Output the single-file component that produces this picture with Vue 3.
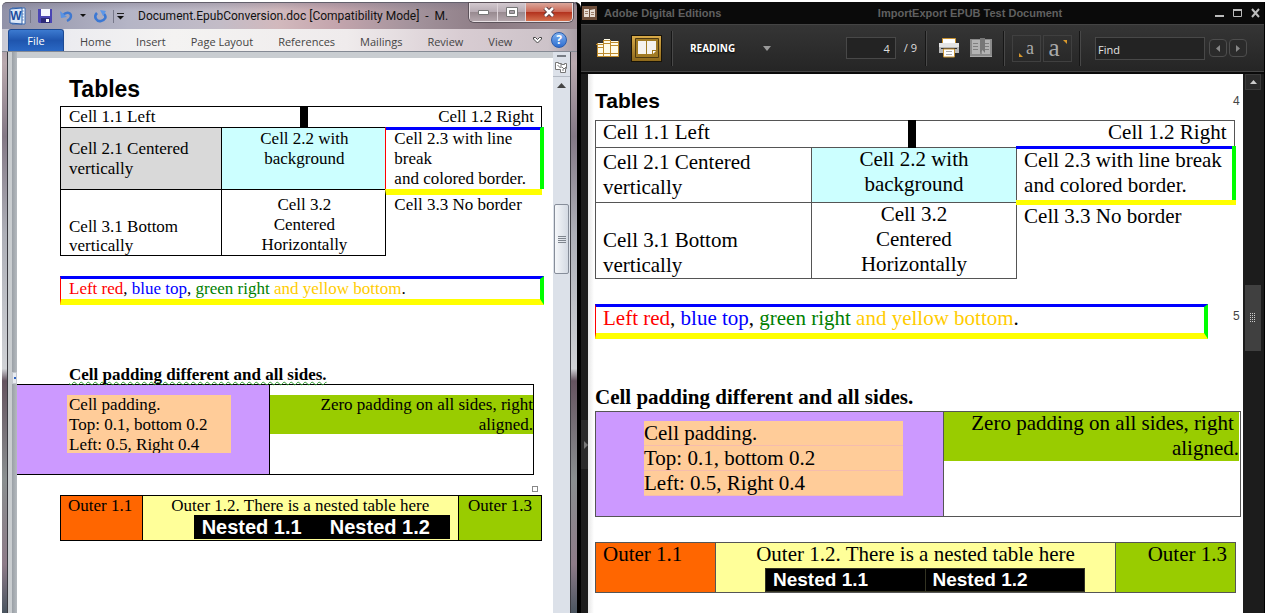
<script setup>
const tabs = ['Home', 'Insert', 'Page Layout', 'References', 'Mailings', 'Review', 'View']
</script>

<template>
  <main class="desktop">
    <section class="word">
      <header class="word-title">
        <svg class="word-logo" width="18" height="18" viewBox="0 0 18 18">
          <path d="M3 1h13v16H3z" fill="#fff" stroke="#3a6cb4" />
          <path d="M13 4h2M13 7h2M13 10h2M13 13h2" stroke="#7fa6d8" />
          <path d="M1 2l12-1v16L1 16z" fill="#dbe8f8" stroke="#2b5da8" />
          <text x="7" y="13" text-anchor="middle" class="logo-letter">W</text>
        </svg>
        <i class="bar"></i>
        <button class="tool" aria-label="Save">
          <svg width="14" height="14" viewBox="0 0 14 14">
            <path d="M0 0h14v14H1l-1-1z" fill="#4a45b4" />
            <path d="M3 0h9v7H3z" fill="#f4f6ff" />
            <path d="M3 9h9v5H3z" fill="#2c2a78" />
            <path d="M8 10h3v3H8z" fill="#fff" />
          </svg>
        </button>
        <button class="tool undo" aria-label="Undo">
          <svg width="14" height="13" viewBox="0 0 14 13">
            <path d="M3 5c4-4 8-2 8 1s-2 4-4 5" fill="none" stroke="#3f78d0" stroke-width="2.4" />
            <path d="M0 1l1 7 6-1z" fill="#5a93e4" />
          </svg>
        </button>
        <svg width="6" height="4" viewBox="0 0 6 4"><path d="M0 0h6L3 3z" fill="#111" /></svg>
        <button class="tool redo" aria-label="Repeat">
          <svg width="13" height="13" viewBox="0 0 13 13">
            <path d="M3 3C-1 7 3 12 7 11s6-4 3-7" fill="none" stroke="#3b78d4" stroke-width="2.6" />
            <path d="M6 0l6 1-3 5z" fill="#5c97e8" />
          </svg>
        </button>
        <i class="bar"></i>
        <svg class="more" width="7" height="8" viewBox="0 0 7 8">
          <path d="M0 1.500h7" stroke="#222" /><path d="M0 4h7L3.500 7.500z" fill="#111" />
        </svg>
        <h1>Document.EpubConversion.doc [Compatibility Mode] &nbsp;-&nbsp; M.</h1>
        <div class="controls">
          <button aria-label="Minimize">
            <svg width="11" height="5" viewBox="0 0 11 5"><path d="M.5.5h10v4H.5z" fill="#fff" stroke="#777" /></svg>
          </button>
          <button aria-label="Maximize">
            <svg width="12" height="10" viewBox="0 0 12 10">
              <path d="M.5.5h11v9H.5z" fill="#fff" stroke="#777" /><path d="M3.500 3.500h5v3h-5z" fill="#a9a0a8" stroke="#777" />
            </svg>
          </button>
          <button class="close" aria-label="Close">
            <svg width="12" height="10" viewBox="0 0 12 10">
              <path d="M2 1l8 8M10 1L2 9" stroke="#59383a" stroke-width="4.500" /><path d="M2 1l8 8M10 1L2 9" stroke="#fff" stroke-width="2.500" />
            </svg>
          </button>
        </div>
      </header>

      <nav class="ribbon">
        <button class="file">File</button>
        <button v-for="t in tabs" :key="t" class="tab">{{ t }}</button>
        <span class="ribbon-end">
          <button aria-label="Expand the ribbon">
            <svg width="9" height="8" viewBox="0 0 9 8">
              <path d="M.5 1.500h2l2 2 2-2h2v1.500l-4 4-4-4z" fill="#fff" stroke="#444" />
            </svg>
          </button>
          <button aria-label="Help" class="help">?</button>
        </span>
      </nav>

      <div class="word-body">
        <div class="gutter"><i></i></div>
        <article class="page">
          <h2>Tables</h2>
          <table class="t1">
            <colgroup><col class="w-a" /><col class="w-b" /><col class="w-c" /><col /></colgroup>
            <tbody>
              <tr class="r1">
                <td colspan="2">Cell 1.1 Left</td>
                <td colspan="2" class="thick right end">Cell 1.2 Right</td>
              </tr>
              <tr class="r2">
                <td class="grey middle">Cell 2.1 Centered vertically</td>
                <td colspan="2" class="cyan center">Cell 2.2 with background</td>
                <td class="rainbow">Cell 2.3 with line break<br />and colored border.</td>
              </tr>
              <tr class="r3">
                <td class="bottom">Cell 3.1 Bottom vertically</td>
                <td colspan="2" class="center">Cell 3.2<br />Centered<br />Horizontally</td>
                <td class="bare">Cell 3.3 No border</td>
              </tr>
            </tbody>
          </table>

          <p class="framed">
            <span class="red">Left red</span>, <span class="blue">blue top</span>, <span class="green">green right</span> <span class="gold">and yellow bottom</span>.
          </p>

          <h3><span>Cell padding different and all sides.</span></h3>
          <table class="t2">
            <colgroup><col class="w-d" /><col /></colgroup>
            <tbody>
              <tr>
                <td class="violet"><div class="peach">Cell padding.<br />Top: 0.1, bottom 0.2<br />Left: 0.5, Right 0.4</div></td>
                <td><div class="lime">Zero padding on all sides, right aligned.</div></td>
              </tr>
            </tbody>
          </table>
          <i class="handle"></i>
          <table class="t3">
            <colgroup><col class="w-e" /><col /><col class="w-f" /></colgroup>
            <tbody>
              <tr>
                <td class="orange">Outer 1.1</td>
                <td class="lemon center">
                  Outer 1.2. There is a nested table here
                  <table class="nested">
                    <tbody><tr><td>Nested 1.1</td><td>Nested 1.2</td></tr></tbody>
                  </table>
                </td>
                <td class="leaf center">Outer 1.3</td>
              </tr>
            </tbody>
          </table>
        </article>
        <aside class="word-scroll">
          <i class="split"></i>
          <svg width="13" height="12" viewBox="0 0 13 12">
            <path d="M.5 1.500h3v1h3v1h3v-1h2v5h-1v4h-5v-3h-5z" fill="#fff" stroke="#777" />
            <path d="M2.500 4l3 3M6 3v4M7 6l2 2 2-2M8 10V8" fill="none" stroke="#777" />
          </svg>
          <button aria-label="Scroll up"><svg width="9" height="5" viewBox="0 0 9 5"><path d="M0 5h9L4.500 0z" fill="#444" /></svg></button>
          <span class="word-track"><i class="before"></i><i class="thumb"></i><i class="after"></i></span>
        </aside>
      </div>
    </section>

    <section class="ade">
      <header class="ade-title">
        <svg width="15" height="14" viewBox="0 0 15 14">
          <path d="M0 0h15v14H0z" fill="#70503c" />
          <path d="M2 3h5v8H2zM8 4l5-1v8H8z" fill="#e8ddd4" />
          <path d="M3 5.500h3M3 7.500h3M9 6.500h3M9 8.500h3" stroke="#9a7c68" />
        </svg>
        <span>Adobe Digital Editions</span>
        <h1>ImportExport EPUB Test Document</h1>
        <div class="ade-controls">
          <button aria-label="Minimize"><svg width="9" height="10" viewBox="0 0 9 10"><path d="M0 8h9" stroke="#bbb" stroke-width="2" /></svg></button>
          <button aria-label="Maximize"><svg width="9" height="10" viewBox="0 0 9 10"><path d="M.5 1v7.500h8V1" fill="none" stroke="#bbb" /><path d="M0 2h9" stroke="#bbb" stroke-width="2" /></svg></button>
          <button aria-label="Close"><svg width="9" height="10" viewBox="0 0 9 10"><path d="M1 1l7 8M8 1L1 9" stroke="#bbb" stroke-width="2" /></svg></button>
        </div>
      </header>

      <div class="ade-bar">
        <button class="library" aria-label="Library">
          <svg width="24" height="20" viewBox="0 0 24 20">
            <path d="M1 5h6v13H1zM8 1h6v17H8zM15 3h8v15h-8z" fill="#fffbe8" />
            <path d="M1.500 5v13M7.500 2v16M14.500 2v16M22.500 3v15M0 6.500h7M1 9.500h6M1 15.500h6M8 2.500h6M8 5.500h6M8 15.500h6M15 4.500h8M15 7.500h8M15 15.500h8M1 18.500h22" stroke="#bd8a2c" />
          </svg>
        </button>
        <button class="reading-icon" aria-label="Reading view">
          <svg width="24" height="20" viewBox="0 0 24 20">
            <path d="M.5.5h23v19H.5z" fill="#a07a24" stroke="#4d3a12" />
            <path d="M3 3h8v13H3zM12 3h9v9h-4v4h-5z" fill="#f4f2ee" />
            <path d="M18 13h3l-3 3z" fill="#fff" />
          </svg>
        </button>
        <i class="groove"></i>
        <label class="mode">
          <select aria-label="View mode"><option>READING</option></select>
          <svg width="8" height="5" viewBox="0 0 8 5"><path d="M0 0h8L4 5z" fill="#999" /></svg>
        </label>
        <label class="pager"><input aria-label="Page" value="4" /><span>/ 9</span></label>
        <i class="groove"></i>
        <button class="print" aria-label="Print">
          <svg width="22" height="20" viewBox="0 0 22 20">
            <path d="M4.500 6V.5h13V6" fill="#fff" stroke="#c99330" />
            <path d="M1 5h20v10H1z" fill="#b9b9b9" />
            <path d="M1 5h20v4H1z" fill="#e4e4e4" />
            <path d="M3 10.500h16" stroke="#333" />
            <path d="M5.500 11h11v8h-11z" fill="#fff" stroke="#c99330" />
            <path d="M8 13.500h6M8 16.500h6" stroke="#aaa" />
          </svg>
        </button>
        <button class="mark" aria-label="Bookmark">
          <svg width="22" height="20" viewBox="0 0 22 20">
            <path d="M0 1h22v18H0z" fill="#8b8b8b" />
            <path d="M2 2h8v14H2zM12 2h8v14h-8z" fill="#b4b4b4" />
            <path d="M3 5.500h5M3 8.500h5M3 11.500h5M15 5.500h4M15 8.500h4M15 11.500h4" stroke="#808080" />
            <path d="M10 0h5v15l-2.500-3-2.500 3z" fill="#777" />
            <path d="M0 18.500h22" stroke="#aaa" />
          </svg>
        </button>
        <i class="groove"></i>
        <div class="sizes">
          <button class="small-a" aria-label="Smaller text">
            <svg width="4" height="4" viewBox="0 0 4 4"><path d="M0 0l4 4H0z" fill="#d8982c" /></svg><span>a</span>
          </button>
          <button class="big-a" aria-label="Larger text">
            <span>a</span><svg width="4" height="4" viewBox="0 0 4 4"><path d="M0 0h4v4z" fill="#d8982c" /></svg>
          </button>
        </div>
        <i class="groove"></i>
        <input class="find" aria-label="Find" value="Find" />
        <div class="steps">
          <button aria-label="Previous match"><svg width="4" height="7" viewBox="0 0 4 7"><path d="M4 0v7L0 3.500z" fill="#888" /></svg></button>
          <button aria-label="Next match"><svg width="4" height="7" viewBox="0 0 4 7"><path d="M0 0v7l4-3.500z" fill="#888" /></svg></button>
        </div>
      </div>

      <div class="ade-body">
        <div class="ade-side"><button aria-label="Show panel"><svg width="4" height="8" viewBox="0 0 4 8"><path d="M0 0v8l4-4z" fill="#777" /></svg></button></div>
        <article class="book">
          <div class="numbered"><h2>Tables</h2><span>4</span></div>
          <table class="b1">
            <colgroup><col class="x-a" /><col class="x-b" /><col class="x-c" /><col /></colgroup>
            <tbody>
              <tr class="q1">
                <td colspan="2"><p>Cell 1.1 Left</p></td>
                <td colspan="2" class="thick right"><p>Cell 1.2 Right</p></td>
              </tr>
              <tr class="q2">
                <td class="middle"><p>Cell 2.1 Centered vertically</p></td>
                <td colspan="2" class="cyan center"><p>Cell 2.2 with<br /> background</p></td>
                <td class="rainbow"><p>Cell 2.3 with line break<br />and colored border.</p></td>
              </tr>
              <tr class="q3">
                <td class="bottom"><p>Cell 3.1 Bottom vertically</p></td>
                <td colspan="2" class="center"><p>Cell 3.2<br />Centered<br />Horizontally</p></td>
                <td class="bare"><p>Cell 3.3 No border</p></td>
              </tr>
            </tbody>
          </table>
          <div class="numbered second">
            <div class="framed">
              <p>
                <span class="red">Left red</span>, <span class="blue">blue top</span>, <span class="green">green right</span> <span class="gold">and yellow bottom</span>.
              </p>
            </div>
            <span>5</span>
          </div>
          <h3>Cell padding different and all sides.</h3>
          <table class="b2">
            <colgroup><col class="x-d" /><col /></colgroup>
            <tbody>
              <tr>
                <td class="violet"><div class="peach">Cell padding.<br />Top: 0.1, bottom 0.2<br />Left: 0.5, Right 0.4</div></td>
                <td><div class="lime"><p>Zero padding on all sides, right&nbsp;<br />aligned.</p></div></td>
              </tr>
            </tbody>
          </table>
          <table class="b3">
            <colgroup><col class="x-e" /><col /><col class="x-e" /></colgroup>
            <tbody>
              <tr>
                <td class="orange"><p>Outer 1.1</p></td>
                <td class="lemon center">
                  <p>Outer 1.2. There is a nested table here</p>
                  <table class="nested">
                    <tbody><tr><td>Nested 1.1</td><td>Nested 1.2</td></tr></tbody>
                  </table>
                </td>
                <td class="leaf right"><p>Outer 1.3</p></td>
              </tr>
            </tbody>
          </table>
        </article>
        <aside class="ade-scroll">
          <button aria-label="Scroll up"><svg width="7" height="4" viewBox="0 0 7 4"><path d="M0 4h7L3.500 0z" fill="#ccc" /></svg></button>
          <i class="before"></i>
          <span class="thumb"><i></i></span>
          <i class="after"></i>
        </aside>
      </div>
    </section>
  </main>
</template>

<style>
body { margin: 0; background: #fff; }
</style>

<style scoped>
* { box-sizing: border-box; }
h1, h2, h3, p { margin: 0; }
button { padding: 0; border: 0; background: none; font: inherit; color: inherit; }
svg { display: block; flex: none; }
i { display: block; flex: none; }
table { border-spacing: 0; table-layout: fixed; width: 100%; }
td { padding: 0; vertical-align: top; }

.desktop { display: grid; grid-template-columns: 581fr 684fr; min-height: 100vh; padding: 2px 0; }
.right { text-align: right; }
.center { text-align: center; }
td.middle { vertical-align: middle; }
td.bottom { vertical-align: bottom; }
.cyan { background: #cff; }
.red { color: #f00; }
.blue { color: #00f; }
.green { color: #008000; }
.gold { color: #fc0; }
.violet { background: #c9f; }
.peach { background: #fc9; }
.lime, .leaf { background: #9c0; }
.orange { background: #f60; }
.lemon { background: #ff9; }

/* Word window */
.word {
  display: flex; flex-direction: column; min-width: 0;
  margin-left: 2px; padding-left: 5px; padding-right: 6px;
  border-right: 4px solid #000; border-radius: 6px 6px 0 0;
  background: linear-gradient(180deg, #8f8c9f, #b9a9ae 10%, #847986 22%, #aeb0b8 38%, #d0d2d6 60%, #655460 62%, #8a8f90 78%, #8d7b88 92%, #4a5560);
}
.word-title {
  display: flex; align-items: center; height: 27px; margin: 0 -6px 0 -5px; padding-left: 7px;
  border-top: 1px solid #63606c; border-radius: 5px 5px 0 0;
  font: 12px/16px Roboto, sans-serif; color: #111;
  background: linear-gradient(rgba(120, 112, 130, .35), transparent 30%), linear-gradient(90deg, #9192a8, #b5b5c6 22%, #c3bcc7 38%, #d2b9bd 48%, #c4a5ad 58%, #a2929b 72%, #8c7b84 85%, #9d8d95);
}
.logo-letter { font: bold 12px "Liberation Sans", sans-serif; fill: #1d4f9e; }
.bar { width: 1px; height: 13px; background: #77788a; }
.word-logo + .bar { margin: 0 7px 0 3px; }
.undo { margin: 0 6px 0 8px; }
.redo { margin: 0 6px 0 8px; }
.more { margin: 0 14px 0 3px; }
.word-title h1 { flex: 1; font: inherit; white-space: nowrap; overflow: hidden; }
.controls { display: flex; align-self: flex-start; margin-right: 4px; border: 1px solid #e8e0e4; border-top: 0; border-radius: 0 0 5px 5px; box-shadow: 0 0 0 1px #5c525a; }
.controls button { display: grid; place-items: center; width: 28px; height: 18px; border-right: 1px solid #ddd3d8; background: linear-gradient(#d2c8ce, #b8acb4 48%, #97898f 50%, #b3a6ac); }
.controls .close { width: 46px; border: 0; border-radius: 0 0 4px 0; background: linear-gradient(#dba79b, #cc6a58 48%, #b2301c 50%, #d4704e); }

.ribbon {
  display: flex; height: 23px; margin: 0 -6px 0 -5px; padding-left: 6px;
  border-bottom: 1px solid #858a94; font: 11px/22px "Open Sans", sans-serif; color: #444;
  background: linear-gradient(90deg, #c9c9d4, #ececf0 12%, #f4f3f2 30%, #efebec 60%, #d8ccd2 80%, #cdc3c9 95%, #a89da5);
}
.file { width: 56px; border: 1px solid #1c4a94; border-bottom: 0; border-radius: 3px 3px 0 0; line-height: 20px; color: #fff; background: linear-gradient(#3c7ad0, #1f55ae 50%, #2a68c4); }
.tab { padding: 2px 12px 0 13px; white-space: nowrap; }
.file + .tab { padding-left: 16px; }
.ribbon-end { display: flex; align-items: center; gap: 9px; margin-left: auto; padding-right: 10px; }
.help { width: 16px; height: 16px; border: 1px solid #2a5cad; border-radius: 8px; background: linear-gradient(#7eb0ee, #2f6ed0); color: #fff; font: bold 12px/14px "Open Sans", sans-serif; }

.word-body { flex: 1; display: flex; min-height: 0; border-left: 1px solid #3a3a40; border-right: 1px solid #3a3a40; background: #c9cdd1; }
.gutter { display: flex; align-items: center; width: 9px; padding-left: 4px; background: linear-gradient(90deg, #c9cdd0 4px, #9aa0a6 4px, #b5babf); }
.gutter i { width: 5px; height: 12px; margin-top: 90px; background: linear-gradient(#2f62c0, #2f62c0) center / 2px 2px no-repeat #e8ebf0; border: 1px solid #c4c8ce; }
.page {
  flex: 1; min-width: 0; margin-top: 6px; padding: 17px 11px 0 43px; background: #fff;
  font: 17px/20px "Liberation Serif", serif; color: #000;
}
.page h2 { margin-bottom: 3px; padding-left: 9px; font: bold 23px/28px "Liberation Sans", sans-serif; }
.page .t1 td { border: solid #000; border-width: 1px 0 0 1px; padding: 0 7px 0 8px; }
.w-a { width: 33.500%; }
.w-b { width: 16.300%; }
.w-c { width: 17.700%; }
.r1 { height: 21px; }
.r2 { height: 62px; }
.r3 { height: 67px; }
.page .t1 .end { border-right-width: 1px; }
.page .t1 .thick { border-left-width: 8px; }
.page .t1 .r2 td { padding-top: 1px; }
.page .t1 .r3 td { padding-top: 5px; border-bottom-width: 1px; }
.page .t1 .bottom { line-height: 19px; }
.page .t1 .grey { background: #d9d9d9; }
.page .t1 .rainbow { padding-right: 0; border-color: #00f #0f0 #000 #f00; border-right-width: 2px; box-shadow: 2px 0 #0f0, inset 0 2px #00f; }
.page .t1 .r3 .bare { padding: 0 0 0 8px; border: 0; border-top: 6px solid #ff0; border-left: 1px solid #000; }
.page .framed { margin: 20px -2px 0 0; padding-left: 8px; border: solid; border-width: 3px 4px 6px 1px; border-color: #00f #0f0 #ff0 #f00; }
.page h3 { margin-top: 60px; padding-left: 9px; font: bold 17px/19px "Liberation Serif", serif; }
.page h3 span { text-decoration: underline wavy #2b9a2b 1px; text-decoration-skip-ink: none; text-underline-offset: 1px; }
.t2 { width: calc(100% + 35px); margin-left: -43px; border: solid #000; border-width: 1px 1px 1px 0; }
.t2 td { height: 89px; padding-top: 10px; }
.w-d { width: 49%; }
.t2 .violet { padding-left: 50px; padding-right: 38px; border-right: 1px solid #000; }
.t2 .peach { max-height: 58px; padding-left: 2px; overflow: hidden; white-space: nowrap; }
.t2 .lime { max-height: 39px; padding-left: 40px; text-align: right; }
.handle { width: 6px; height: 6px; margin: 11px 4px 3px auto; border: 1px solid #888; }
.t3 { border: 1px solid #000; line-height: 19px; }
.t3 > tbody > tr > td + td { border-left: 1px solid #000; }
.w-e { width: 16.800%; }
.w-f { width: 17.300%; }
.t3 .orange { padding-left: 7px; }
.t3 .nested { width: calc(100% - 59px); margin: 0 8px 1px auto; background: #000; color: #fff; text-align: left; font: bold 20px/24px "Liberation Sans", sans-serif; }
.t3 .nested td { padding-left: 8px; }

.word-scroll { display: flex; flex-direction: column; align-items: center; width: 17px; background: #dce1e9; }
.split { width: 9px; height: 2px; margin: 3px 0 4px; background: #777c84; }
.word-scroll button { display: grid; place-items: center; width: 17px; height: 17px; margin-top: 3px; border-top: 1px solid #b4bac4; }
.word-track { flex: 1; display: flex; flex-direction: column; }
.before { flex: 112 0 0; }
.after { flex: 341 0 0; }
.thumb { flex: 68 0 0; }
.word-track .thumb { width: 15px; border: 1px solid #868d99; border-radius: 2px; background: repeating-linear-gradient(#7f858e 0 1px, transparent 1px 2px) center / 8px 7px no-repeat, linear-gradient(90deg, #f5f7fa, #d4dae3); }

/* Digital Editions window */
.ade { display: flex; flex-direction: column; min-width: 0; background: #0a0a0a; border-right: 1px solid #000; }
.ade-title { display: grid; grid-template-columns: 15px 263fr auto 188fr; align-items: center; gap: 7px; height: 22px; padding: 0 4px 0 1px; font: bold 11px/14px "Liberation Sans", sans-serif; color: #606060; }
.ade-title h1 { font: inherit; }
.ade-controls { display: flex; justify-content: flex-end; gap: 9px; }
.ade-bar { display: flex; align-items: center; height: 48px; padding-left: 15px; border-top: 1px solid #444; border-bottom: 1px solid #454545; background: linear-gradient(#353535, #252525); color: #ddd; font: 11px/14px "Open Sans", sans-serif; }
.reading-icon { display: grid; place-items: center; width: 31px; height: 27px; margin: 0 9px 0 11px; border: 1px solid #1a1408; background: linear-gradient(#d8aa48, #8f6a1c); }
.groove { width: 2px; height: 35px; background: #161616; border-right: 1px solid #484848; }
.mode { display: flex; align-items: center; margin-left: 17px; }
.mode select { appearance: none; width: 73px; padding: 0; border: 0; background: none; color: #fff; font: bold 10px/14px "Open Sans", sans-serif; text-shadow: 0 1px 2px #000; }
.pager { display: flex; align-items: center; gap: 8px; margin: 0 8px 0 auto; white-space: nowrap; }
.pager input { width: 50px; height: 22px; padding: 0 5px; border: 1px solid #484848; background: #232323; color: #ddd; font: inherit; text-align: right; }
.print { margin: 0 10px 0 11px; }
.mark { margin-right: 11px; }
.sizes { display: flex; gap: 2px; margin: 0 7px; color: #aaa; font: 18px/20px "Liberation Serif", serif; }
.sizes button { display: flex; justify-content: center; gap: 3px; width: 29px; height: 27px; border: 1px solid #404040; }
.small-a { align-items: flex-end; padding-bottom: 4px; }
.small-a span { line-height: 17px; }
.big-a { padding-top: 4px; font-size: 25px; line-height: 16px; }
.find { width: 110px; height: 23px; margin: 0 4px 0 14px; padding: 3px 2px 0; border: 1px solid #484848; background: #232323; color: #e4e4e4; font: 11px/14px "Open Sans", sans-serif; }
.steps { display: flex; gap: 2px; margin-right: 17px; }
.steps button { display: grid; place-items: center; width: 18px; height: 18px; border: 1px solid #4d4d4d; border-radius: 4px; background: #2b2b2b; }

.ade-body { flex: 1; display: flex; padding-top: 2px; }
.ade-side { display: flex; align-items: center; width: 7px; background: #1c1c1c; }
.ade-side button { display: grid; place-items: center end; width: 7px; height: 49px; margin-top: 202px; background: #2b2b2b; }
.book { flex: 1; min-width: 0; padding: 14px 7px 0 7px; background: linear-gradient(90deg, #e6e6e6, #fff 6px); font: 21px/25px "Liberation Serif", serif; color: #000; }
.book h2 { font: bold 21px/25px "Liberation Sans", sans-serif; }
.numbered { display: flex; justify-content: space-between; align-items: center; margin-right: -4px; }
.numbered > span { width: 7px; font: 12px/14px "Liberation Sans", sans-serif; color: #444; }
.numbered.second > span { align-self: flex-start; margin-top: 5px; }
.book p { margin-top: -1px; }
.b1, .b2, .b3 { border-collapse: collapse; }
.b1 { margin-top: 7px; }
.b1 td, .b2 td, .b3 td { border: 1px solid #555; }
.b1 td { padding: 0 7px; }
.x-a { width: 33.800%; }
.x-b { width: 15.700%; }
.x-c { width: 16.450%; }
.q1 { height: 27px; }
.q2 { height: 55px; }
.q3 { height: 76px; }
.b1 .thick { border-left: 8px solid #000; }
.b1 .rainbow { border-style: solid; border-width: 3px 4px 5px 1px; border-color: #00f #0f0 #ff0 #f00; padding-right: 0; white-space: nowrap; }
.b1 .bare { border-right-style: none; border-bottom-style: none; }
.second { margin-top: 25px; }
.second .framed { flex: 1; margin-right: 25px; }
.book .framed { height: 35px; padding-left: 7px; border: solid; border-width: 3px 4px 6px 1px; border-color: #00f #0f0 #ff0 #f00; }
.book h3 { margin: 46px 0 1px; font: bold 21px/25px "Liberation Serif", serif; }
.b2 { width: calc(100% + 5px); }
.x-d { width: 53.950%; }
.b2 td { height: 105px; }
.b2 .violet { padding: 9px 40px 0 48px; }
.b2 .peach { background: repeating-linear-gradient(#fc9 0 24px, #f5bcae 24px 25px); }
.b2 .lime { margin-right: 1px; text-align: right; display: flow-root; }
.b3 { margin-top: 25px; }
.x-e { width: 18.750%; }
.b3 > tbody > tr > td { padding: 0 8px 0 7px; }
.b3 > tbody > tr > .lemon { padding: 0; }
.b3 .nested { width: calc(100% - 79px); margin: 1px 30px 0 auto; border-collapse: collapse; background: #000; color: #fff; text-align: left; font: bold 19px/22px "Liberation Sans", sans-serif; }
.b3 .nested td { padding-left: 7px; border: 1px solid #332; }

.ade-scroll { display: flex; flex-direction: column; width: 21px; padding: 0 3px 0 2px; background: #1c1c1c; }
.ade-scroll button { display: grid; place-items: center; height: 16px; background: #2a2a2a; border: 1px solid #3a3a3a; }
.ade-scroll .before { flex: 195 0 0; }
.ade-scroll .thumb { flex: 66 0 0; display: grid; place-items: center; background: #404040; }
.ade-scroll .thumb i { width: 6px; height: 9px; background: repeating-linear-gradient(transparent 0 1px, #404040 1px 2px), repeating-linear-gradient(90deg, #ccc 0 1px, #404040 1px 2px); }
.ade-scroll .after { flex: 263 0 0; }
</style>
